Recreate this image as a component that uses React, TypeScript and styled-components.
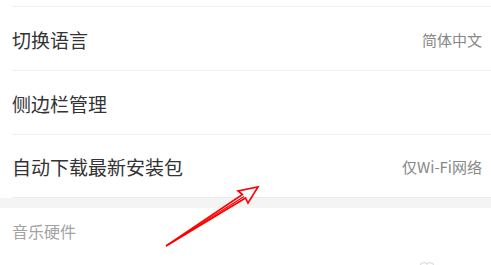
import React from "react";
import styled, { createGlobalStyle } from "styled-components";

const Global = createGlobalStyle`
  html, body { margin: 0; padding: 0; background: #fff; }
  body { font-family: "Noto Sans CJK SC", "Noto Sans", sans-serif; overflow: hidden; }
`;

const Page = styled.div`
  position: relative;
  width: 491px;
  height: 265px;
  background: #fff;
  overflow: hidden;
`;

const TopSpacer = styled.div`
  height: 6px;
`;

const Row = styled.div<{ $last?: boolean }>`
  box-sizing: border-box;
  margin-left: 12px;
  padding-right: 9px;
  height: 64px;
  border-top: 1px solid #efefef;
  ${(p) => (p.$last ? "border-bottom: 1px solid #ececec;" : "")}
  display: flex;
  align-items: center;
  justify-content: space-between;
`;

const Label = styled.span`
  font-size: 19px;
  color: #333;
  line-height: 1;
  padding-top: 1px;
`;

const Value = styled.span`
  font-size: 15px;
  color: #888;
  line-height: 1;
  padding-top: 1px;
`;

const Band = styled.div`
  height: 10px;
  background: #f4f4f4;
`;

const SectionHeader = styled.div`
  padding: 12px 12px 0;
  font-size: 16px;
  line-height: 22px;
  color: #a3a3a3;
`;

const Overlay = styled.svg`
  position: absolute;
  left: 0;
  top: 0;
  pointer-events: none;
`;

const FaintIcon = styled.svg`
  position: absolute;
  left: 417px;
  top: 258px;
`;

export default function App() {
  return (
    <Page>
      <Global />
      <TopSpacer />
      <Row>
        <Label>切换语言</Label>
        <Value>简体中文</Value>
      </Row>
      <Row>
        <Label>侧边栏管理</Label>
      </Row>
      <Row $last>
        <Label>自动下载最新安装包</Label>
        <Value>仅Wi-Fi网络</Value>
      </Row>
      <Band />
      <SectionHeader>音乐硬件</SectionHeader>
      <FaintIcon width="20" height="10" viewBox="0 0 20 10">
        <path d="M3 9 A4 4 0 0 1 10 6 A4 4 0 0 1 17 9" fill="none" stroke="#dcdcdc" strokeWidth="1.2" />
      </FaintIcon>
      <Overlay width="491" height="265" viewBox="0 0 491 265">
        <path
          d="M166 246 L242.5 194.5 L238 191 L258 187 L248 203 L245.5 198 Z"
          fill="none"
          stroke="#ff0000"
          strokeWidth="1.6"
          strokeLinejoin="miter"
        />
        <path d="M166 246 L244 196.5" stroke="#ff0000" strokeWidth="1.2" />
      </Overlay>
    </Page>
  );
}
